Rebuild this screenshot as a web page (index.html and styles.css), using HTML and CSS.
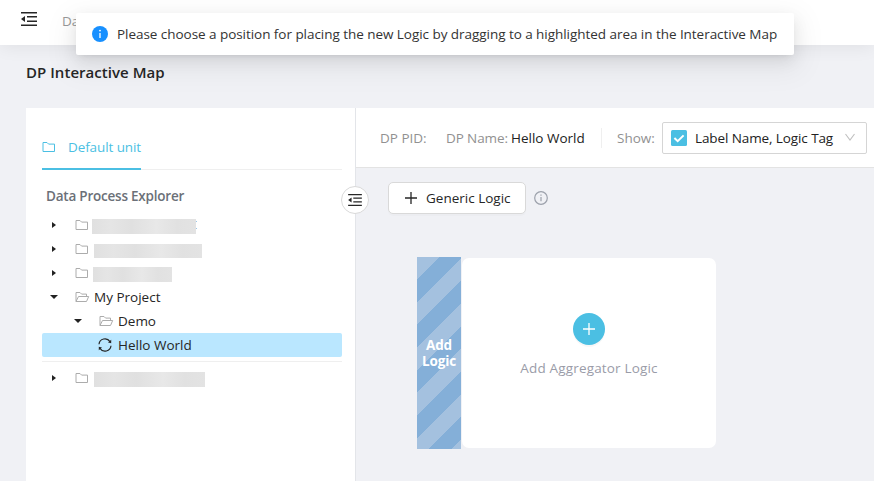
FILE: index.html
```html
<!DOCTYPE html>
<html lang="en">
<head>
<meta charset="utf-8">
<title>DP Interactive Map</title>
<link rel="stylesheet" href="styles.css">
</head>
<body>
<svg class="defs" width="0" height="0" aria-hidden="true">
  <symbol id="menu-fold" viewBox="0 0 16 14"><path d="M0 .75h16M6 4.75h10M6 9.25h10M0 13.25h16" stroke="currentColor" stroke-width="1.4" fill="none"/><path d="M0 7l4-3v6z" fill="currentColor"/></symbol>
  <symbol id="folder" viewBox="0 0 14 12"><path d="M1 1.5h4l1.6 1.6h5.9v7.4H1z" fill="none" stroke="currentColor" stroke-width="1"/></symbol>
  <symbol id="folder-open" viewBox="0 0 15 12"><path d="M11.5 5.5V3.1H6.6L5 1.5H1v9h10.5l2.2-5H3.5L1 10.5" fill="none" stroke="currentColor" stroke-width="1"/></symbol>
  <symbol id="plus" viewBox="0 0 14 14"><path d="M7 1v12M1 7h12" stroke="currentColor" stroke-width="1.3"/></symbol>
</svg>

<header class="header">
  <svg class="header-fold"><use href="#menu-fold"/></svg>
  <span class="crumb">Data</span>
</header>

<div class="toast" role="status">
  <svg class="toast-icon" viewBox="0 0 16 16"><circle cx="8" cy="8" r="8" fill="#1890ff"/><path d="M8 7v5" stroke="#fff" stroke-width="1.3"/><circle cx="8" cy="4.6" r=".9" fill="#fff"/></svg>
  <span class="toast-text">Please choose a position for placing the new Logic by dragging to a highlighted area in the Interactive Map</span>
</div>

<main class="page">
  <h1 class="title">DP Interactive Map</h1>
  <div class="workspace">
    <aside class="sidebar">
      <nav class="tabs">
        <div class="tab"><svg class="folder-icon"><use href="#folder"/></svg><span class="tab-label">Default unit</span></div>
      </nav>
      <h2 class="explorer-title">Data Process Explorer</h2>
      <ul class="tree">
        <li class="row"><i class="caret"></i><svg class="folder-icon"><use href="#folder"/></svg><span class="mask mask-a"></span><span class="mask-tail"></span></li>
        <li class="row"><i class="caret"></i><svg class="folder-icon"><use href="#folder"/></svg><span class="mask mask-b"></span></li>
        <li class="row"><i class="caret"></i><svg class="folder-icon"><use href="#folder"/></svg><span class="mask mask-c"></span></li>
        <li class="row"><i class="caret open"></i><svg class="folder-icon wide"><use href="#folder-open"/></svg><span class="project">My Project</span></li>
        <li class="row nested"><i class="caret open"></i><svg class="folder-icon wide"><use href="#folder-open"/></svg><span class="demo">Demo</span></li>
        <li class="row selected"><svg class="sync" viewBox="0 0 14 14"><path d="M1 6.2A6 6 0 0 1 12 3.6M13 7.8A6 6 0 0 1 2 10.4" fill="none" stroke="currentColor" stroke-width="1.2"/><path d="M13.2 1.8v3.4l-3.2-.8zM.8 12.2V8.8l3.2.8z" fill="currentColor"/></svg><span class="hello">Hello World</span></li>
        <li class="row after-rule"><i class="caret"></i><svg class="folder-icon"><use href="#folder"/></svg><span class="mask mask-d"></span></li>
      </ul>
      <button class="collapse" aria-label="Collapse"><svg class="collapse-icon"><use href="#menu-fold"/></svg></button>
    </aside>
    <section class="content">
      <div class="toolbar">
        <span class="pid">DP PID:</span>
        <span class="name">DP Name:</span>
        <span class="name-value">Hello World</span>
        <span class="divider"></span>
        <span class="show">Show:</span>
        <div class="select">
          <svg class="check" viewBox="0 0 16 16"><rect width="16" height="16" rx="1.5" fill="#4bbfe3"/><path d="M3.4 8l3.3 3.2 5.9-5.8" fill="none" stroke="#fff" stroke-width="2"/></svg>
          <span class="select-text">Label Name, Logic Tag</span>
          <svg class="chevron" viewBox="0 0 12 9"><path d="M1.5 1l4.5 6 4.5-6" fill="none" stroke="#c0c0c0" stroke-width="1.1"/></svg>
        </div>
      </div>
      <div class="actions">
        <button class="generic"><svg class="plus"><use href="#plus"/></svg><span class="generic-text">Generic Logic</span></button>
        <svg class="info" viewBox="0 0 14 14"><circle cx="7" cy="7" r="6.3" fill="none" stroke="currentColor" stroke-width="1.2"/><path d="M7 6v4.3M7 3.5v1.2" stroke="currentColor" stroke-width="1.2"/></svg>
      </div>
      <div class="canvas">
        <div class="drop-zone"><span class="drop-text">Add Logic</span></div>
        <div class="card">
          <span class="round"><svg class="plus"><use href="#plus"/></svg></span>
          <span class="card-text">Add Aggregator Logic</span>
        </div>
      </div>
    </section>
  </div>
</main>
</body>
</html>
```
FILE: styles.css
```css
* { box-sizing: border-box; }
body {
  margin: 0;
  height: 481px;
  overflow: hidden;
  background: #f0f1f5;
  color: #262626;
  font: 13.5px/22px "Open Sans", "Noto Sans", sans-serif;
  white-space: nowrap;
}
h1, h2, ul { margin: 0; padding: 0; font: inherit; }
button { font: inherit; color: inherit; padding: 0; }
svg { display: block; flex: none; }
.defs { position: absolute; }

.header {
  display: flex;
  align-items: flex-start;
  height: 45px;
  padding: 12px 21px 0;
  background: #fff;
  box-shadow: 0 2px 18px rgba(0, 0, 0, .07);
}
.header-fold { width: 16px; height: 14px; }
.crumb { margin: -2px 0 0 25px; color: #999; }

.toast {
  position: absolute;
  left: 76px;
  top: 13px;
  z-index: 5;
  display: flex;
  align-items: center;
  width: 718px;
  height: 42px;
  padding-left: 16px;
  background: #fff;
  border-radius: 2px;
  box-shadow: 0 3px 6px -4px rgba(0, 0, 0, .12), 0 6px 16px rgba(0, 0, 0, .08), 0 9px 28px 8px rgba(0, 0, 0, .05);
}
.toast-icon { width: 16px; height: 16px; }
.toast-text { margin-left: 9px; letter-spacing: -.045px; color: #333; }

.page { padding: 15px 0 0 26px; }
.title { height: 48px; line-height: 24px; font-size: 15px; font-weight: 600; letter-spacing: .04px; }
.workspace { display: flex; height: 373px; }

.sidebar {
  position: relative;
  flex: none;
  width: 330px;
  padding: 17px 13px 0 16px;
  background: #fff;
  border-right: 1px solid #e3e5e9;
}
.tabs { display: flex; height: 45px; border-bottom: 1px solid #efefef; }
.tab {
  display: flex;
  align-items: center;
  width: 99px;
  height: 45px;
  color: #4bbfe3;
  border-bottom: 2px solid #4bbfe3;
}
.folder-icon { width: 14px; height: 12px; }
.folder-icon.wide { width: 15px; margin-right: -1px; }
.tab-label { margin-left: 12px; letter-spacing: -.1px; }
.explorer-title { margin: 15px 0 6px 4px; color: #6b7078; font-weight: 600; letter-spacing: -.22px; }

.tree { list-style: none; }
.row { display: flex; align-items: center; height: 24px; padding-left: 10px; }
.row .folder-icon { color: #acacac; margin-left: 19px; }
.row.nested { padding-left: 34px; }
.row.selected { width: 300px; padding-left: 57px; background: #bae7ff; border-radius: 2px; }
.row.after-rule { height: 33px; margin-top: 4px; width: 300px; border-top: 1px solid #efefef; }
.caret { width: 4px; height: 0; border: solid transparent; border-width: 3.5px 0 3.5px 4px; border-left-color: #222; }
.caret.open { width: 8px; height: 4px; margin: 0 -2px; border-width: 4px 4px 0; border-color: #222 transparent transparent; }
.project, .demo { margin-left: 5px; }
.sync { width: 14px; height: 14px; margin-left: -1px; }
.hello { margin-left: 6px; }
.mask { height: 15px; margin-top: 3px; background: linear-gradient(90deg, #e0e0e0, #e5e5e5 18%, #e0e0e0 38%, #e8e8e8 62%, #e1e1e1 82%, #e3e3e3); }
.mask-a { width: 104px; margin-left: 3px; }
.mask-b { width: 108px; height: 14px; margin-left: 5px; }
.mask-c { width: 79px; margin-left: 4px; }
.mask-d { width: 111px; margin-left: 5px; }
.mask-tail { width: 1px; height: 8px; background: linear-gradient(#9bc7e8 1px, transparent 1px 7px, #9bc7e8 7px); }

.collapse {
  position: absolute;
  right: -14px;
  top: 78px;
  display: flex;
  align-items: center;
  justify-content: center;
  width: 28px;
  height: 28px;
  background: #fff;
  border: 1px solid #d9d9d9;
  border-radius: 50%;
}
.collapse-icon { width: 14px; height: 12px; }

.content { flex: 1; min-width: 0; }
.toolbar {
  display: flex;
  align-items: center;
  height: 60px;
  padding-left: 24px;
  background: #fff;
  border-bottom: 1px solid #e3e3e3;
  color: #919191;
}
.pid { width: 66px; }
.name { width: 65px; letter-spacing: -.1px; }
.name-value { width: 90px; color: #222; }
.divider { width: 1px; height: 20px; background: #efefef; }
.show { width: 45px; margin-left: 15px; }
.select {
  display: flex;
  align-items: center;
  width: 205px;
  height: 32px;
  padding-left: 8px;
  color: #222;
  background: #fff;
  border: 1px solid #d5d5d5;
  border-radius: 2px;
}
.check { width: 16px; height: 16px; }
.select-text { width: 149px; margin-left: 8px; letter-spacing: -.1px; }
.chevron { width: 12px; height: 9px; }

.actions { display: flex; align-items: center; height: 32px; margin: 14px 0 0 32px; }
.generic {
  display: flex;
  align-items: center;
  width: 138px;
  height: 32px;
  padding-left: 15px;
  background: #fff;
  border: 1px solid #d9d9d9;
  border-radius: 5px;
  box-shadow: 0 2px 0 rgba(0, 0, 0, .015);
}
.plus { width: 14px; height: 14px; }
.generic-text { margin-left: 8px; }
.info { width: 14px; height: 14px; margin-left: 8px; color: #9ca1ab; }

.canvas { display: flex; align-items: center; margin: 43px 0 0 61px; }
.drop-zone {
  display: flex;
  align-items: center;
  justify-content: center;
  width: 44px;
  height: 192px;
  background: repeating-linear-gradient(135deg, #a4c1df 0 16px, #84afd8 16px 32px);
  color: #fff;
  font-weight: 700;
  line-height: 16px;
}
.drop-text { width: 40px; text-align: center; white-space: normal; letter-spacing: -.1px; }
.card {
  display: flex;
  flex-direction: column;
  align-items: center;
  width: 254px;
  height: 190px;
  margin-left: 1px;
  padding-top: 55px;
  background: #fff;
  border-radius: 7px;
}
.round {
  display: flex;
  align-items: center;
  justify-content: center;
  width: 32px;
  height: 32px;
  color: #fff;
  background: #4bbfe3;
  border-radius: 50%;
  box-shadow: 0 2px 0 rgba(0, 0, 0, .03);
}
.card-text { margin-top: 12px; color: #9a9ca8; letter-spacing: .17px; }
```
